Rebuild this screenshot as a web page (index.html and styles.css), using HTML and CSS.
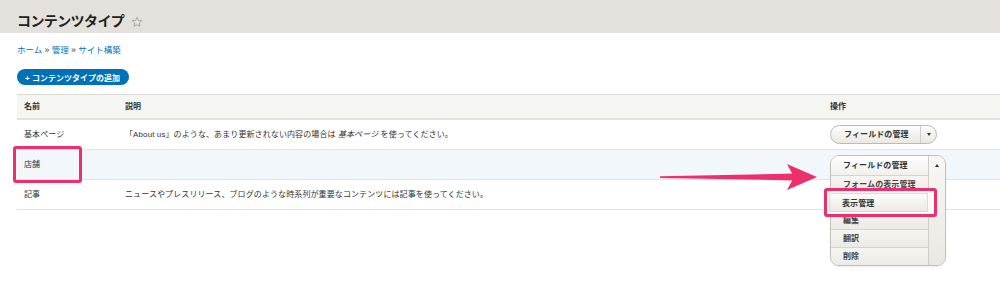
FILE: index.html
```html
<!DOCTYPE html>
<html lang="ja">
<head>
    <meta charset="UTF-8">
    <title>コンテンツタイプ</title>
    <link rel="stylesheet" href="styles.css">
</head>
<body>
    <div class="page-header">
        <h1 class="page-title">コンテンツタイプ
            <svg class="star" viewBox="0 0 24 24"><path d="M12 2.5l2.9 6.2 6.8.7-5.1 4.6 1.5 6.7L12 17.3l-6.1 3.4 1.5-6.7-5.1-4.6 6.8-.7z" fill="none" stroke="#9a9a9a" stroke-width="1.6" stroke-linejoin="round"/></svg>
        </h1>
    </div>

    <div class="content">
        <nav class="breadcrumb">
            <a href="#">ホーム</a> » <a href="#">管理</a> » <a href="#">サイト構築</a>
        </nav>

        <div class="actions">
            <a href="#" class="button-action">+ コンテンツタイプの追加</a>
        </div>

        <table class="types">
            <colgroup>
                <col class="col-name">
                <col>
                <col class="col-ops">
            </colgroup>
            <thead>
                <tr>
                    <th>名前</th>
                    <th>説明</th>
                    <th>操作</th>
                </tr>
            </thead>
            <tbody>
                <tr>
                    <td>基本ページ</td>
                    <td>「About us」のような、あまり更新されない内容の場合は <em>基本ページ</em> を使ってください。</td>
                    <td class="ops">
                        <div class="dropbutton">
                            <span class="db-main">フィールドの管理</span>
                            <span class="db-toggle"><i class="caret-down"></i></span>
                        </div>
                    </td>
                </tr>
                <tr class="hover">
                    <td class="name-cell">店舗<span class="callout"></span></td>
                    <td></td>
                    <td class="ops">
                        <div class="db-slot">
                            <div class="dropbutton open">
                                <ul class="db-list">
                                    <li class="first">フィールドの管理</li>
                                    <li>フォームの表示管理</li>
                                    <li class="marked"><span>表示管理</span></li>
                                    <li>編集</li>
                                    <li>翻訳</li>
                                    <li class="last">削除</li>
                                </ul>
                                <span class="db-toggle"><i class="caret-up"></i></span>
                            </div>
                        </div>
                    </td>
                </tr>
                <tr>
                    <td>記事</td>
                    <td>ニュースやプレスリリース、ブログのような時系列が重要なコンテンツには記事を使ってください。</td>
                    <td class="ops"></td>
                </tr>
            </tbody>
        </table>

        <svg class="arrow" width="165" height="32" viewBox="0 0 165 32">
            <polygon points="5,15.2 139,12.6 139,19.4 5,17" fill="#ee2f6d"/>
            <polygon points="132,3 162,16 132,29 139,16" fill="#ee2f6d"/>
        </svg>
    </div>
</body>
</html>
```

FILE: styles.css
```css
* {
    margin: 0;
    padding: 0;
    box-sizing: border-box;
}
html, body {
    min-height: 100vh;
}
body {
    font-family: "Liberation Sans", "Noto Sans CJK JP", sans-serif;
    font-size: 8px;
    color: #333;
    background: #fff;
}
.page-header {
    height: 33px;
    background: #e4e1dc;
    padding: 13px 0 0 17px;
}
.page-title {
    display: flex;
    align-items: center;
    gap: 7px;
    font-size: 14px;
    line-height: 17px;
    font-weight: bold;
    letter-spacing: -0.6px;
    color: #222;
}
.star {
    width: 12px;
    height: 12px;
}
.content {
    position: relative;
    padding-left: 17px;
    padding-bottom: 100px;
}
.breadcrumb {
    margin-top: 11px;
    font-size: 8.5px;
    line-height: 12px;
}
.breadcrumb a {
    color: #0074bd;
    text-decoration: none;
}
.actions {
    display: flex;
    margin-top: 13px;
}
.button-action {
    display: flex;
    align-items: center;
    height: 16px;
    padding: 0 9px 0 8px;
    background: #0071b8;
    color: #fff;
    font-weight: bold;
    font-size: 8px;
    border-radius: 10px;
    text-decoration: none;
}
.types {
    margin-top: 9px;
    width: 100%;
    border-collapse: separate;
    border-spacing: 0;
    table-layout: fixed;
}
.col-name {
    width: 101px;
}
.col-ops {
    width: 177px;
}
th {
    background: #f5f5f2;
    border-top: 1px solid #dcdad5;
    border-bottom: 2px solid #e3e1dc;
    padding: 6px 7px;
    line-height: 11px;
    text-align: left;
    font-weight: bold;
}
td {
    padding: 9px 7px;
    line-height: 11px;
    border-bottom: 1px solid #e6e4df;
    vertical-align: middle;
    letter-spacing: 0.1px;
    white-space: nowrap;
}
td.ops {
    padding: 5px 7px;
}
tr.hover td {
    background: #f2f7fb;
}
.name-cell {
    position: relative;
}
.callout {
    position: absolute;
    left: -4px;
    top: -4px;
    width: 69px;
    height: 37px;
    border: 3px solid #ee2f6d;
    border-radius: 3px;
}
.dropbutton {
    display: flex;
    width: 107px;
    height: 19px;
    border: 1px solid #bcbab4;
    border-radius: 10px;
    background: linear-gradient(#fdfdfc, #e9e8e3);
    overflow: hidden;
}
.db-main {
    flex: 1;
    display: flex;
    align-items: center;
    padding-left: 13px;
    font-weight: bold;
    color: #333;
}
.db-toggle {
    width: 16px;
    border-left: 1px solid #cfcdc8;
    display: flex;
    align-items: center;
    justify-content: center;
}
.caret-down {
    border-left: 2.5px solid transparent;
    border-right: 2.5px solid transparent;
    border-top: 3px solid #333;
}
.caret-up {
    border-left: 2.5px solid transparent;
    border-right: 2.5px solid transparent;
    border-bottom: 3px solid #333;
}
.db-slot {
    position: relative;
    height: 19px;
}
.dropbutton.open {
    position: absolute;
    z-index: 2;
    top: 0;
    left: 0;
    width: 116px;
    height: auto;
    border-color: #c2c0ba;
    border-radius: 9px;
    overflow: visible;
    background: #efeee9;
    box-shadow: 0 1px 2px rgba(0, 0, 0, 0.08);
}
.db-list {
    flex: 1;
    list-style: none;
}
.db-list li {
    height: 18px;
    line-height: 17px;
    padding-left: 12px;
    border-top: 1px solid #d6d4cf;
    background: linear-gradient(#f6f5f2, #ebeae5);
    font-weight: bold;
    color: #444;
}
.db-list li.first {
    height: 19px;
    line-height: 19px;
    border-top: none;
    border-radius: 8px 0 0 0;
    background: linear-gradient(#fff, #f1f0ec);
    color: #333;
}
.db-list li.last {
    border-radius: 0 0 0 8px;
}
.db-list li.marked {
    position: relative;
    z-index: 1;
    height: 29px;
    margin: -5px -9px -6px -7px;
    padding: 2px 6px 2px 2px;
    border: 3px solid #ee2f6d;
    border-radius: 3px;
    background: #fbfbfa;
}
.db-list li.marked span {
    display: block;
    height: 19px;
    line-height: 19px;
    padding-left: 12px;
    border: 1px solid #dddbd6;
    background: linear-gradient(#fbfbf9, #ebeae5);
    color: #333;
}
.dropbutton.open .db-toggle {
    width: 17px;
    align-items: flex-start;
    padding-top: 8px;
    background: linear-gradient(#f8f7f4, #e9e8e3);
    border-radius: 0 8px 8px 0;
}
.arrow {
    position: absolute;
    left: 655px;
    top: 117px;
}
```
